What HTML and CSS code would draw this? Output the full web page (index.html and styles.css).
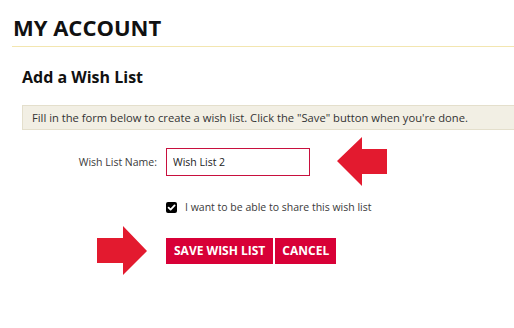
FILE: index.html
```html
<!DOCTYPE html>
<html>
<head>
<meta charset="utf-8">
<link rel="stylesheet" href="styles.css">
</head>
<body>
<div class="page">
  <h1 class="title">MY ACCOUNT</h1>
  <div class="content">
    <h2 class="subtitle">Add a Wish List</h2>
    <div class="info">Fill in the form below to create a wish list. Click the "Save" button when you're done.</div>
    <div class="form">
      <label class="label" for="name">Wish List Name:</label>
      <div class="field">
        <input id="name" class="input" type="text" value="Wish List 2">
        <svg class="arrow arrow-left" width="50" height="50" viewBox="0 0 50 50"><polygon points="0,24 25,0 25,12 50,12 50,37 25,37 25,49" fill="#e31a2f"/></svg>
      </div>
      <div></div>
      <div class="check-row">
        <span class="checkbox"><svg width="11" height="11" viewBox="0 0 11 11"><path d="M2.6 5.6 L4.6 7.6 L8.6 3.4" stroke="#fff" stroke-width="1.8" fill="none" stroke-linecap="round" stroke-linejoin="round"/></svg></span>
        <span class="check-text">I want to be able to share this wish list</span>
      </div>
      <div></div>
      <div class="buttons">
        <svg class="arrow arrow-right" width="50" height="50" viewBox="0 0 50 50"><polygon points="50,25 26,0 26,12 0,12 0,37 26,37 26,49" fill="#e31a2f"/></svg>
        <button class="btn">SAVE WISH LIST</button>
        <button class="btn btn-cancel">CANCEL</button>
      </div>
    </div>
  </div>
</div>
</body>
</html>
```
FILE: styles.css
```css
* { box-sizing: border-box; }
html, body { margin: 0; padding: 0; background: #fff; }
body { font-family: "Open Sans", "DejaVu Sans", sans-serif; color: #222; width: 514px; height: 328px; overflow: hidden; }
.page { padding-left: 12px; }
.title {
  margin: 12px 0 0 0;
  font-size: 22px;
  line-height: 30px;
  font-weight: 700;
  color: #111;
  padding: 0 0 4px 1px;
  border-bottom: 1px solid #f3e6b0;
}
.content { padding-left: 10px; }
.subtitle {
  margin: 19px 0 0 0;
  font-size: 16px;
  line-height: 22px;
  font-weight: 700;
  color: #111;
}
.info {
  margin-top: 17px;
  height: 25px;
  background: #f2efe4;
  border: 1px solid #e4dfcc;
  border-right: none;
  font-size: 11.2px;
  line-height: 23px;
  padding-left: 9px;
  color: #333;
  white-space: nowrap;
}
.form {
  display: grid;
  grid-template-columns: 144px auto;
  margin-top: 18px;
}
.label {
  font-size: 10.5px;
  color: #3a3a3a;
  text-align: right;
  padding-right: 9px;
  align-self: center;
}
.field { position: relative; height: 28px; }
.input {
  width: 144px;
  height: 28px;
  border: 1px solid #c8103e;
  padding: 0 6px;
  font-family: "Open Sans", sans-serif;
  font-size: 10.5px;
  color: #222;
  outline: none;
  margin: 0;
}
.arrow { position: absolute; }
.arrow-left { left: 171px; top: -11px; }
.check-row {
  display: flex;
  align-items: center;
  gap: 8px;
  margin-top: 26px;
  height: 11px;
}
.checkbox {
  width: 11px; height: 11px;
  background: #000;
  border-radius: 2px;
  display: flex;
}
.check-text { font-size: 10.5px; color: #3a3a3a; line-height: 11px; }
.buttons {
  position: relative;
  display: flex;
  gap: 2px;
  margin-top: 25px;
}
.arrow-right { left: -69px; top: -12px; }
.btn {
  background: #d80037;
  color: #fff;
  border: none;
  margin: 0;
  height: 26px;
  padding: 0 8px;
  font-family: "Open Sans", sans-serif;
  font-weight: 700;
  font-size: 12px;
  line-height: 26px;
}
.btn-cancel { padding: 0 7px; }
```
